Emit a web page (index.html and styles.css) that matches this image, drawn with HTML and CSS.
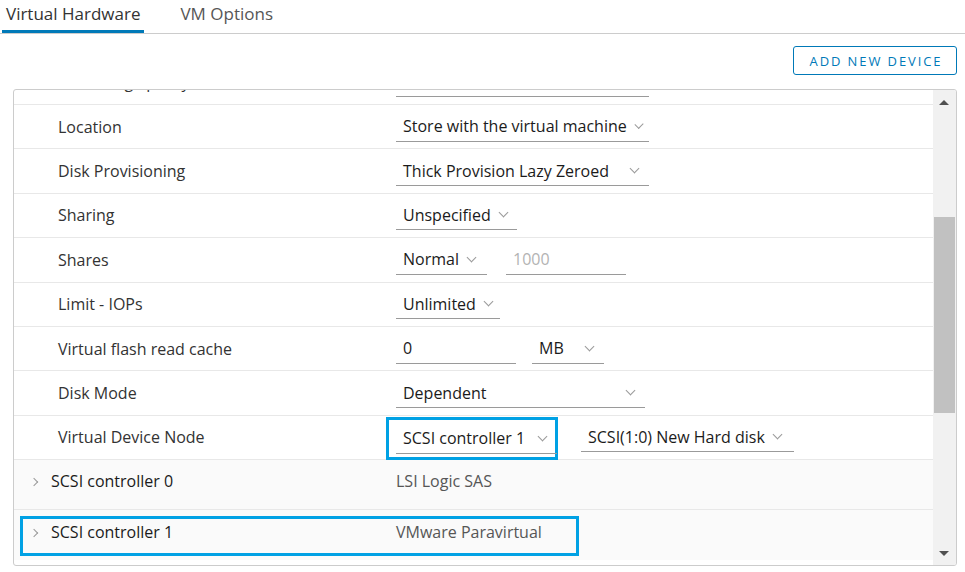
FILE: index.html
```html
<!DOCTYPE html>
<html>
<head>
<meta charset="utf-8">
<link rel="stylesheet" href="styles.css">
</head>
<body>
<div class="tabs">
  <div class="tab active">Virtual Hardware</div>
  <div class="tab">VM Options</div>
</div>
<div class="toolbar">
  <button class="btn">ADD NEW DEVICE</button>
</div>
<div class="grid">
  <div class="viewport">
    <div class="rows">
      <div class="row sub">
        <div class="label">VM storage policy</div>
        <div class="value"><div class="select w253"><span>Datastore Default</span></div></div>
      </div>
      <div class="row sub">
        <div class="label">Location</div>
        <div class="value"><div class="select w253"><span>Store with the virtual machine</span><i class="chev"></i></div></div>
      </div>
      <div class="row sub">
        <div class="label">Disk Provisioning</div>
        <div class="value"><div class="select w253 spread"><span>Thick Provision Lazy Zeroed</span><i class="chev"></i></div></div>
      </div>
      <div class="row sub">
        <div class="label">Sharing</div>
        <div class="value"><div class="select w121"><span>Unspecified</span><i class="chev"></i></div></div>
      </div>
      <div class="row sub">
        <div class="label">Shares</div>
        <div class="value"><div class="select w91"><span>Normal</span><i class="chev"></i></div><div class="input w120 ml19 muted">1000</div></div>
      </div>
      <div class="row sub">
        <div class="label">Limit - IOPs</div>
        <div class="value"><div class="select w104"><span>Unlimited</span><i class="chev"></i></div></div>
      </div>
      <div class="row sub">
        <div class="label">Virtual flash read cache</div>
        <div class="value"><div class="input w120">0</div><div class="select w72 ml16 spread"><span>MB</span><i class="chev"></i></div></div>
      </div>
      <div class="row sub">
        <div class="label">Disk Mode</div>
        <div class="value"><div class="select w249 spread"><span>Dependent</span><i class="chev"></i></div></div>
      </div>
      <div class="row sub">
        <div class="label">Virtual Device Node</div>
        <div class="value">
          <div class="hl-wrap"><div class="select w161 spread"><span>SCSI controller 1</span><i class="chev"></i></div></div>
          <div class="select w213 ml23"><span>SCSI(1:0) New Hard disk</span><i class="chev"></i></div>
        </div>
      </div>
      <div class="row group">
        <div class="label"><i class="caret"></i>SCSI controller 0</div>
        <div class="value dim">LSI Logic SAS</div>
      </div>
      <div class="row group last">
        <div class="hl-row">
          <div class="label"><i class="caret"></i>SCSI controller 1</div>
          <div class="value dim">VMware Paravirtual</div>
        </div>
      </div>
    </div>
  </div>
  <div class="scrollbar">
    <div class="arrow up"></div>
    <div class="track"><div class="thumb"></div></div>
    <div class="arrow down"></div>
  </div>
</div>
</body>
</html>
```
FILE: styles.css
```css
html, body {
  margin: 0;
  padding: 0;
  background: #fff;
}
body {
  width: 965px;
  height: 572px;
  overflow: hidden;
  font-family: "Open Sans", "Noto Sans", sans-serif;
  font-size: 16px;
  color: #333;
}
.tabs {
  display: flex;
  height: 33px;
  border-bottom: 1px solid #ccc;
  padding-left: 2px;
}
.tab {
  height: 33px;
  box-sizing: border-box;
  padding: 2px 4px 0;
  color: #565656;
  margin-right: 32px;
  font-size: 17px;
  white-space: nowrap;
}
.tab.active {
  color: #333;
  border-bottom: 3px solid #0079b8;
}
.toolbar {
  display: flex;
  justify-content: flex-end;
  padding: 12px 8px 0 0;
  height: 44px;
  box-sizing: border-box;
}
.btn {
  width: 164px;
  height: 29px;
  border: 1px solid #0079b8;
  border-radius: 3px;
  background: #fff;
  color: #0079b8;
  font-family: inherit;
  font-size: 13px;
  letter-spacing: 1.9px;
  padding: 0 0 0 2px;
}
.grid {
  margin: 11px 0 0 13px;
  width: 944px;
  height: 477px;
  box-sizing: border-box;
  border: 1px solid #ccc;
  border-radius: 3px;
  display: flex;
  overflow: hidden;
}
.viewport {
  flex: 1;
  overflow: hidden;
}
.rows {
  margin-top: -29.4px;
}
.row {
  display: flex;
  align-items: center;
  height: 44.4px;
  box-sizing: border-box;
  border-bottom: 1px solid #e8e8e8;
}
.label {
  box-sizing: border-box;
  white-space: nowrap;
}
.row.sub .label {
  width: 382px;
  padding-left: 44px;
  color: #333;
}
.value {
  display: flex;
  align-items: center;
  color: #222;
  white-space: nowrap;
}
.select, .input {
  height: 30px;
  box-sizing: border-box;
  border-bottom: 1px solid #9a9a9a;
  display: flex;
  align-items: center;
  padding: 0 7px;
  color: #1b1b1b;
}
.select span { white-space: nowrap; }
.chev {
  display: inline-block;
  width: 6px;
  height: 6px;
  border-right: 1px solid #9a9a9a;
  border-bottom: 1px solid #9a9a9a;
  transform: rotate(45deg);
  margin: -4px 0 0 9px;
}
.spread { justify-content: space-between; }
.spread .chev { margin-right: 4px; }
.muted { color: #b3b3b3; }
.w253 { width: 253px; }
.w249 { width: 249px; }
.w121 { width: 121px; }
.w91 { width: 91px; }
.w120 { width: 120px; }
.w104 { width: 104px; }
.w72 { width: 72px; }
.w161 { width: 161px; }
.w213 { width: 213px; }
.ml19 { margin-left: 19px; }
.ml16 { margin-left: 16px; }
.ml23 { margin-left: 23px; }
.hl-wrap {
  margin-left: -10px;
  padding: 0 0 0 10px;
  border: 3px solid #00a1e4;
  height: 43px;
  box-sizing: border-box;
  display: flex;
  align-items: center;
  margin-top: 3px;
}
.hl-wrap .select { margin: 0 -2px 0 -3px; padding-left: 7px; }
.row.group {
  background: #fafafa;
  height: 50px;
  align-items: flex-start;
}
.row.group > .label {
  width: 382px;
  padding-left: 17px;
  color: #1b1b1b;
  display: flex;
  align-items: center;
  height: 42px;
}
.row.group > .value {
  height: 42px;
}
.caret {
  display: inline-block;
  width: 5px;
  height: 5px;
  border-right: 1px solid #999;
  border-top: 1px solid #999;
  transform: rotate(45deg);
  margin: 2px 14px 0 0;
}
.dim { color: #565656; }
.row.group.last { border-bottom: none; }
.hl-row {
  display: flex;
  align-items: center;
  margin: 6px 0 0 6px;
  width: 559px;
  height: 40px;
  box-sizing: border-box;
  border: 3px solid #00a1e4;
  padding-bottom: 8px;
}
.hl-row .label {
  width: 373px;
  padding-left: 8px;
  color: #1b1b1b;
  display: flex;
  align-items: center;
}
.scrollbar {
  width: 23px;
  background: #f1f1f1;
  display: flex;
  flex-direction: column;
}
.arrow {
  height: 17px;
  position: relative;
}
.arrow::after {
  content: "";
  position: absolute;
  left: 6px;
  border-left: 5px solid transparent;
  border-right: 5px solid transparent;
}
.arrow.up::after {
  top: 10px;
  border-bottom: 5px solid #505050;
}
.arrow.down::after {
  top: 3px;
  border-top: 5px solid #505050;
}
.track {
  flex: 1;
  padding-top: 110px;
}
.thumb {
  margin: 0 1px;
  height: 196px;
  background: #c1c1c1;
}
```
